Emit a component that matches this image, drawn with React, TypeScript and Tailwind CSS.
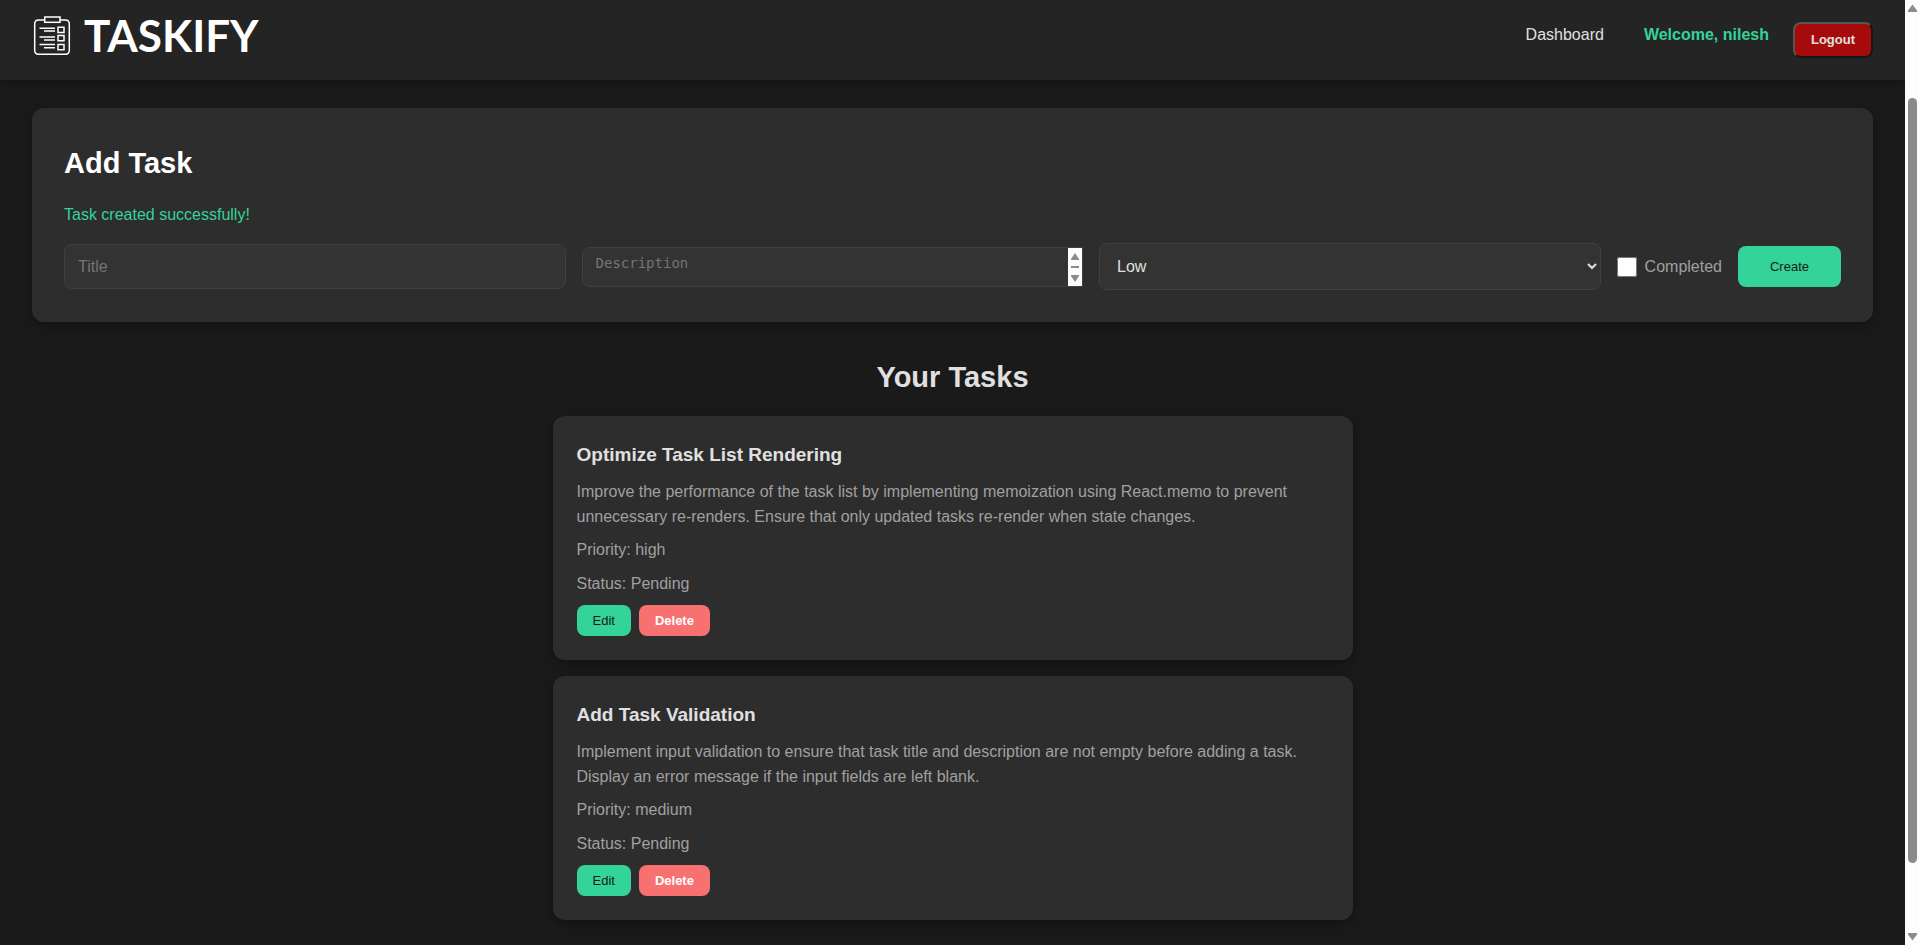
import React from "react";

type Task = { title: string; description: string; priority: string; status: string };

const tasks: Task[] = [
  {
    title: "Optimize Task List Rendering",
    description:
      "Improve the performance of the task list by implementing memoization using React.memo to prevent unnecessary re-renders. Ensure that only updated tasks re-render when state changes.",
    priority: "high",
    status: "Pending",
  },
  {
    title: "Add Task Validation",
    description:
      "Implement input validation to ensure that task title and description are not empty before adding a task. Display an error message if the input fields are left blank.",
    priority: "medium",
    status: "Pending",
  },
];

function ClipboardLogo() {
  return (
    <svg width="40" height="40" viewBox="0 0 40 40" fill="none" stroke="#fff" aria-hidden="true">
      <path d="M12 4H6.700Q2.700 4 2.700 8V34.300Q2.700 38.300 6.700 38.300H33.300Q37.300 38.300 37.300 34.300V8Q37.300 4 33.300 4H28" strokeWidth="1.5" />
      <rect x="12.700" y="1" width="15.300" height="5.300" strokeWidth="1.500" />
      <path d="M7.500 12.200h15.500M12 15h11M7.500 21h15.500M12 24h11M7.500 28.600h15.500M12 31.700h11" strokeWidth="1.5" />
      <path d="M26 11.300h6v5.300h-6zM26 19.500h6v5.300h-6zM26 28.400h6v5.300h-6z" strokeWidth="1.5" />
    </svg>
  );
}

function Header() {
  return (
    <header className="flex h-20 items-start justify-between bg-[#242424] px-8 shadow-[0_2px_10px_rgba(0,0,0,0.3)]">
      <a href="#" className="flex items-start gap-3 pt-4">
        <ClipboardLogo />
        <span className="font-[Lato,sans-serif] text-[44px] leading-[38px] font-bold text-white">TASKIFY</span>
      </a>
      <nav className="flex items-start gap-6 pt-[22px]">
        <a href="#" className="mr-4 leading-[26px]">Dashboard</a>
        <span className="leading-[26px] font-bold text-[#34d399]">Welcome, nilesh</span>
        <button className="h-9 rounded-lg border-2 border-t-[#555] border-r-[#161616] border-b-[#161616] border-l-[#555] bg-[#a70a0a] px-4 text-[13px] font-bold">
          Logout
        </button>
      </nav>
    </header>
  );
}

function AddTask() {
  return (
    <section className="mx-8 mt-7 rounded-xl bg-[#2d2d2d] p-8 shadow-[0_4px_12px_rgba(0,0,0,0.3)]">
      <h2 className="text-[29px] leading-[46px] font-bold text-white">Add Task</h2>
      <p className="mt-4 leading-[25px] text-[#34d399]">Task created successfully!</p>
      <form
        className="mt-4 grid grid-cols-[1fr_1fr_1fr_auto_auto] items-center gap-4"
        onSubmit={(e) => e.preventDefault()}
      >
        <input
          aria-label="Title"
          placeholder="Title"
          className="h-[45px] w-full min-w-0 rounded-lg border border-[#404040] bg-[#333] px-[13px] text-base placeholder:text-[#757575]"
        />
        <div className="flex h-10 min-w-0 overflow-hidden rounded-l-lg border border-[#404040] bg-[#333]">
          <textarea
            aria-label="Description"
            placeholder="Description"
            className="h-full min-w-0 flex-1 resize-none overflow-hidden px-[13px] pt-[7px] font-['DejaVu_Sans_Mono',monospace] text-[14px] leading-4 placeholder:text-[#757575]"
          />
          <svg width="14" height="38" viewBox="0 0 14 38" className="shrink-0 bg-[#fcfcfc]" fill="#8b8b8b" aria-hidden="true">
            <path d="M7 5l4 6v1H3v-1zM3 18h8v2H3zM3 27h8v1l-4 6-4-6z" />
          </svg>
        </div>
        <select
          aria-label="Priority"
          className="h-[47px] w-full min-w-0 rounded-lg border border-[#404040] bg-[#333] px-[13px] text-base"
        >
          <option>Low</option>
          <option>Medium</option>
          <option>High</option>
        </select>
        <label className="flex items-center gap-2 text-[#a0a0a0]">
          <input type="checkbox" className="size-5" />
          Completed
        </label>
        <button className="h-[41px] rounded-lg bg-[#34d399] px-8 text-[13px] text-[#1a1a1a]">Create</button>
      </form>
    </section>
  );
}

function TaskCard({ task }: { task: Task }) {
  return (
    <li className="rounded-xl bg-[#2d2d2d] p-6 shadow-[0_4px_12px_rgba(0,0,0,0.3)]">
      <h3 className="mb-[10px] text-[19px] leading-[29px] font-bold">{task.title}</h3>
      <div className="flex flex-col gap-2 leading-[26px] text-[#a0a0a0]">
        <p className="leading-[25px]">{task.description}</p>
        <p>Priority: {task.priority}</p>
        <p>Status: {task.status}</p>
      </div>
      <div className="mt-2 flex gap-2">
        <button className="h-[31px] rounded-lg bg-[#34d399] px-4 text-[13px] text-[#1a1a1a]">Edit</button>
        <button className="h-[31px] rounded-lg bg-[#f87171] px-4 text-[13px] font-bold text-white">Delete</button>
      </div>
    </li>
  );
}

function Scrollbar() {
  return (
    <div className="flex w-[14px] shrink-0 flex-col items-center bg-[#fcfcfc] py-1" aria-hidden="true">
      <svg width="9" height="8" viewBox="0 0 9 8" fill="#8b8b8b">
        <path d="M4.500 0.500L9 6.500V8H0V6.500z" />
      </svg>
      <div className="grow-[86]" />
      <div className="w-[9px] grow-[765] rounded-full bg-[#8b8b8b]" />
      <div className="grow-[70]" />
      <svg width="9" height="8" viewBox="0 0 9 8" fill="#8b8b8b">
        <path d="M4.500 7.500L9 1.500V0H0V1.500z" />
      </svg>
    </div>
  );
}

export default function App() {
  return (
    <div className="flex min-h-screen bg-[#1a1a1a] font-['Liberation_Sans',Arial,sans-serif] text-base text-[#e0e0e0]">
      <div className="min-w-0 flex-1 pb-6">
        <Header />
        <main>
          <AddTask />
          <section className="mx-auto mt-8 max-w-[800px]">
            <h2 className="text-center text-[29px] leading-[46px] font-bold">Your Tasks</h2>
            <ul className="mt-4 flex flex-col gap-4">
              {tasks.map((task) => (
                <TaskCard key={task.title} task={task} />
              ))}
            </ul>
          </section>
        </main>
      </div>
      <Scrollbar />
    </div>
  );
}
